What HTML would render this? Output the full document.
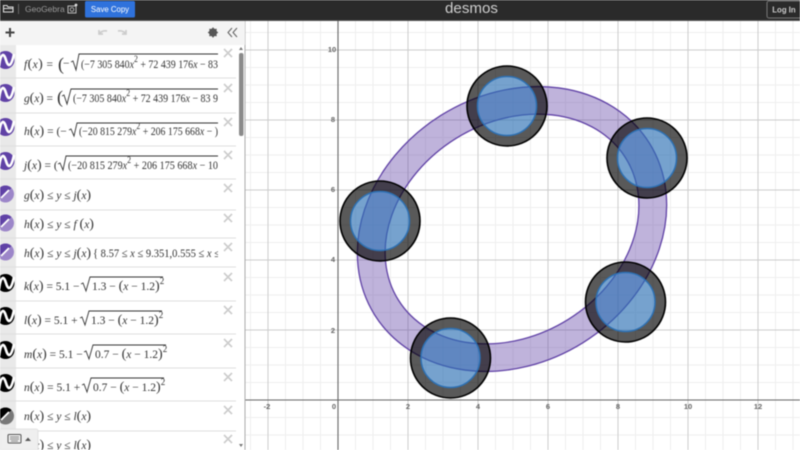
<!DOCTYPE html>
<html><head><meta charset="utf-8"><style>
html,body{margin:0;padding:0;background:#fff;width:800px;height:450px;overflow:hidden}
svg{display:block;filter:blur(.5px)}
text{font-family:"Liberation Sans",sans-serif}
.m text,text.m{font-family:"Liberation Serif",serif;font-size:11.5px;fill:#333}
.i{font-style:italic}
.t{font-size:7.5px;fill:#666;font-weight:bold}
.x{stroke:#ccc;stroke-width:1.6;fill:none}
.s{stroke:#ddd;stroke-width:1}
.r{fill:none;stroke:#333;stroke-width:.9}
</style></head><body>
<svg width="800" height="450" viewBox="0 0 800 450" xmlns="http://www.w3.org/2000/svg">
<defs>
<clipPath id="c"><rect x="17" y="45" width="201" height="405"/></clipPath>
<clipPath id="ic"><rect x="0" y="45" width="16" height="405"/></clipPath>
</defs>
<rect width="800" height="450" fill="#fff"/>
<!-- grid -->
<path fill="none" stroke="#eee" stroke-width="1" d="M250.5 21V450M285.5 21V450M303 21V450M320.5 21V450M355.5 21V450M373 21V450M390.5 21V450M425.5 21V450M443 21V450M460.5 21V450M495.5 21V450M513 21V450M530.5 21V450M565.5 21V450M583 21V450M600.5 21V450M635.5 21V450M653 21V450M670.5 21V450M705.5 21V450M723 21V450M740.5 21V450M775.5 21V450M793 21V450M245 435H800M245 417.5H800M245 382.5H800M245 365H800M245 347.5H800M245 312.5H800M245 295H800M245 277.5H800M245 242.5H800M245 225H800M245 207.5H800M245 172.5H800M245 155H800M245 137.5H800M245 102.5H800M245 85H800M245 67.5H800M245 32.5H800"/>
<path fill="none" stroke="#ccc" stroke-width="1" d="M268 21V450M408 21V450M478 21V450M548 21V450M618 21V450M688 21V450M758 21V450M245 330H800M245 260H800M245 190H800M245 120H800M245 50H800"/>
<path fill="none" stroke="#666" stroke-width="1.1" d="M338 21V450M245 400H800"/>
<!-- tick labels -->
<g class="t" text-anchor="middle">
<text class="t" x="267" y="409">-2</text><text class="t" x="334" y="409">0</text><text class="t" x="408" y="409">2</text><text class="t" x="478" y="409">4</text><text class="t" x="548" y="409">6</text><text class="t" x="618" y="409">8</text><text class="t" x="688" y="409">10</text><text class="t" x="758" y="409">12</text>
<text class="t" x="333" y="333">2</text><text class="t" x="333" y="262">4</text><text class="t" x="333" y="192">6</text><text class="t" x="333" y="122">8</text><text class="t" x="332" y="52">10</text>
</g>
<!-- purple ring -->
<g transform="translate(512 229) rotate(-32)">
<path fill="#6042a6" fill-opacity=".4" fill-rule="evenodd" d="M-162 0A162 134 0 1 0 162 0A162 134 0 1 0 -162 0ZM-134 0A134 106.500 0 1 0 134 0A134 106.500 0 1 0 -134 0Z"/>
<ellipse rx="162" ry="134" fill="none" stroke="#6042a6" stroke-width="1.3"/>
<ellipse rx="134" ry="106.500" fill="none" stroke="#6042a6" stroke-width="1.3"/>
</g>
<!-- circles -->
<g id="circles">
<path fill="#000" fill-opacity=".65" fill-rule="evenodd" d="M340 221a40 40 0 1 0 80 0a40 40 0 1 0 -80 0ZM350.500 221a29.500 29.500 0 1 0 59 0a29.500 29.500 0 1 0 -59 0Z"/>
<path fill="#000" fill-opacity=".65" fill-rule="evenodd" d="M467 106a40 40 0 1 0 80 0a40 40 0 1 0 -80 0ZM477.500 106a29.500 29.500 0 1 0 59 0a29.500 29.500 0 1 0 -59 0Z"/>
<path fill="#000" fill-opacity=".65" fill-rule="evenodd" d="M607 158a40 40 0 1 0 80 0a40 40 0 1 0 -80 0ZM617.500 158a29.500 29.500 0 1 0 59 0a29.500 29.500 0 1 0 -59 0Z"/>
<path fill="#000" fill-opacity=".65" fill-rule="evenodd" d="M585.500 302a40 40 0 1 0 80 0a40 40 0 1 0 -80 0ZM596 302a29.500 29.500 0 1 0 59 0a29.500 29.500 0 1 0 -59 0Z"/>
<path fill="#000" fill-opacity=".65" fill-rule="evenodd" d="M410.500 358a40 40 0 1 0 80 0a40 40 0 1 0 -80 0ZM421 358a29.500 29.500 0 1 0 59 0a29.500 29.500 0 1 0 -59 0Z"/>
<g fill="#2d70b3" fill-opacity=".65" stroke="#2d70b3" stroke-width="1.5">
<circle cx="380" cy="221" r="29.500"/><circle cx="507" cy="106" r="29.500"/><circle cx="647" cy="158" r="29.500"/><circle cx="625.500" cy="302" r="29.500"/><circle cx="450.500" cy="358" r="29.500"/>
</g>
<g fill="none" stroke="#000" stroke-width="1.600">
<circle cx="380" cy="221" r="40"/><circle cx="507" cy="106" r="40"/><circle cx="647" cy="158" r="40"/><circle cx="625.500" cy="302" r="40"/><circle cx="450.500" cy="358" r="40"/>
</g>
</g>
<!-- left panel -->
<rect x="0" y="21" width="245" height="429" fill="#fff"/>
<rect x="244.500" y="21" width="1" height="429" fill="#aaa"/>
<rect x="0" y="21" width="245" height="24" fill="#f4f4f4"/>
<rect x="0" y="45" width="16" height="405" fill="#e9e9e9"/>
<path class="s" d="M0 78H236M0 113H236M0 146H236M0 179H236M0 210H236M0 238H236M0 267H236M0 301H236M0 334H236M0 368H236M0 401H236M0 431H236"/>
<!-- toolbar -->
<path d="M10 28V37M5.500 32.500H14.500" stroke="#444" stroke-width="2" fill="none"/>
<path d="M99 34q3-4 8-3M99 30v4h4" fill="none" stroke="#ccc" stroke-width="1.700"/>
<path d="M126 34q-3-4-8-3M126 30v4h-4" fill="none" stroke="#ccc" stroke-width="1.700"/>
<circle cx="213" cy="32.500" r="3" fill="none" stroke="#555" stroke-width="2.200"/>
<path d="M213 27.500v10M208 32.500h10M209.500 29l7 7M216.500 29l-7 7" stroke="#555" stroke-width="1.300"/>
<path d="M232 28l-4 4.500l4 4.500M237 28l-4 4.500l4 4.500" fill="none" stroke="#666" stroke-width="1.100"/>
<!-- scrollbar -->
<rect x="239" y="53" width="4.500" height="83" rx="2" fill="#8a8a8a"/>
<path d="M241 47l-2 3h4zM241 447l-2-3h4z" fill="#777"/>
<!-- icons -->
<g clip-path="url(#ic)">
<g fill="#6042a6"><circle cx="5.500" cy="60" r="9"/><circle cx="5.500" cy="93" r="9"/><circle cx="5.500" cy="127" r="9"/><circle cx="5.500" cy="161" r="9"/></g>
<g fill="none" stroke="#fff" stroke-width="2.600"><path d="M-1 66C1 52 4 53 6 60S11 68 14 54"/><path d="M-1 99C1 85 4 86 6 93S11 101 14 87"/><path d="M-1 133C1 119 4 120 6 127S11 135 14 121"/><path d="M-1 167C1 153 4 154 6 161S11 169 14 155"/></g>
<g fill="#000"><circle cx="5.500" cy="283" r="9"/><circle cx="5.500" cy="316" r="9"/><circle cx="5.500" cy="350" r="9"/><circle cx="5.500" cy="383" r="9"/></g>
<g fill="none" stroke="#fff" stroke-width="2.600"><path d="M-1 289C1 275 4 276 6 283S11 291 14 277"/><path d="M-1 322C1 308 4 309 6 316S11 324 14 310"/><path d="M-1 356C1 342 4 343 6 350S11 358 14 344"/><path d="M-1 389C1 375 4 376 6 383S11 391 14 377"/></g>
<g fill="#9c86c9"><circle cx="5.500" cy="194" r="8.500"/><circle cx="5.500" cy="223" r="8.500"/><circle cx="5.500" cy="252" r="8.500"/></g>
<path fill="#6042a6" d="M-3 194A8.500 8.500 0 0 1 11.500 188L-1 200ZM-3 223A8.500 8.500 0 0 1 11.500 217L-1 229ZM-3 252A8.500 8.500 0 0 1 11.500 246L-1 258Z"/>
<path stroke="#fff" stroke-width="1.800" d="M1 198L9 190M1 227L9 219M1 256L9 248"/>
<circle cx="5.500" cy="416" r="8.500" fill="#777"/><path fill="#000" d="M-3 416A8.500 8.500 0 0 1 11.500 410L-1 422Z"/>
<path stroke="#fff" stroke-width="1.800" d="M1 420L9 412"/>
</g>
<!-- X marks -->
<path class="x" d="M224 49l8 8M232 49l-8 8M224 84l8 8M232 84l-8 8M224 118l8 8M232 118l-8 8M224 151l8 8M232 151l-8 8M224 184l8 8M232 184l-8 8M224 214l8 8M232 214l-8 8M224 243l8 8M232 243l-8 8M224 273l8 8M232 273l-8 8M224 306l8 8M232 306l-8 8M224 339l8 8M232 339l-8 8M224 373l8 8M232 373l-8 8M224 406l8 8M232 406l-8 8M224 435l8 8M232 435l-8 8"/>
<!-- math -->
<g class="m" clip-path="url(#c)">
<text x="24" y="68" textLength="29"><tspan class="i">f</tspan><tspan font-size="14">(</tspan><tspan class="i">x</tspan><tspan font-size="14">)</tspan> =</text>
<text x="58" y="70" style="font-size:18px">(</text>
<text x="63" y="67">−</text>
<path class="r" d="M71 62l2-1l3 9l3-16H218"/>
<text x="81" y="68" textLength="137" lengthAdjust="spacingAndGlyphs">(−7 305 840<tspan class="i">x</tspan><tspan font-size="9" dy="-6">2</tspan><tspan dy="6"> + 72 439 176</tspan><tspan class="i">x</tspan> − 83</text>

<text x="24" y="102" textLength="29"><tspan class="i">g</tspan><tspan font-size="14">(</tspan><tspan class="i">x</tspan><tspan font-size="14">)</tspan> =</text>
<text x="57" y="103" style="font-size:18px">(</text>
<path class="r" d="M62 96l2-1l3 9l4-15H218"/>
<text x="73" y="102" textLength="145" lengthAdjust="spacingAndGlyphs">(−7 305 840<tspan class="i">x</tspan><tspan font-size="9" dy="-6">2</tspan><tspan dy="6"> + 72 439 176</tspan><tspan class="i">x</tspan> − 83 9</text>

<text x="24" y="135"><tspan class="i">h</tspan><tspan font-size="14">(</tspan><tspan class="i">x</tspan><tspan font-size="14">)</tspan> = (−</text>
<path class="r" d="M69 130l2-1l3 7l3-13H218"/>
<text x="79" y="135" textLength="139" lengthAdjust="spacingAndGlyphs">(−20 815 279<tspan class="i">x</tspan><tspan font-size="9" dy="-6">2</tspan><tspan dy="6"> + 206 175 668</tspan><tspan class="i">x</tspan> − )</text>

<text x="24" y="169"><tspan class="i">j</tspan><tspan font-size="14">(</tspan><tspan class="i">x</tspan><tspan font-size="14">)</tspan> = (</text>
<path class="r" d="M58 164l2-1l3 7l3-14H218"/>
<text x="68" y="169" textLength="150" lengthAdjust="spacingAndGlyphs">(−20 815 279<tspan class="i">x</tspan><tspan font-size="9" dy="-6">2</tspan><tspan dy="6"> + 206 175 668</tspan><tspan class="i">x</tspan> − 10</text>

<text x="24" y="199"><tspan class="i">g</tspan><tspan font-size="14">(</tspan><tspan class="i">x</tspan><tspan font-size="14">)</tspan> ≤ <tspan class="i">y</tspan> ≤ <tspan class="i">j</tspan><tspan font-size="14">(</tspan><tspan class="i">x</tspan><tspan font-size="14">)</tspan></text>
<text x="24" y="228"><tspan class="i">h</tspan><tspan font-size="14">(</tspan><tspan class="i">x</tspan><tspan font-size="14">)</tspan> ≤ <tspan class="i">y</tspan> ≤ <tspan class="i">f</tspan> <tspan font-size="14">(</tspan><tspan class="i">x</tspan><tspan font-size="14">)</tspan></text>
<text x="24" y="257"><tspan class="i">h</tspan><tspan font-size="14">(</tspan><tspan class="i">x</tspan><tspan font-size="14">)</tspan> ≤ <tspan class="i">y</tspan> ≤ <tspan class="i">j</tspan><tspan font-size="14">(</tspan><tspan class="i">x</tspan><tspan font-size="14">)</tspan></text>
<text x="93" y="257" textLength="127" lengthAdjust="spacingAndGlyphs">{ 8.57 ≤ <tspan class="i">x</tspan> ≤ 9.351,0.555 ≤ <tspan class="i">x</tspan> ≤</text>

<text x="24" y="290"><tspan class="i">k</tspan><tspan font-size="14">(</tspan><tspan class="i">x</tspan><tspan font-size="14">)</tspan> = 5.1 −</text>
<path class="r" d="M81 284l2-1l3 8l4-14H163"/>
<text x="92" y="290">1.3 − <tspan font-size="14">(</tspan><tspan class="i">x</tspan> − 1.2<tspan font-size="14">)</tspan><tspan font-size="9" dy="-6">2</tspan></text>

<text x="24" y="324"><tspan class="i">l</tspan><tspan font-size="14">(</tspan><tspan class="i">x</tspan><tspan font-size="14">)</tspan> = 5.1 +</text>
<path class="r" d="M80 318l2-1l3 8l4-14H162"/>
<text x="91" y="324">1.3 − <tspan font-size="14">(</tspan><tspan class="i">x</tspan> − 1.2<tspan font-size="14">)</tspan><tspan font-size="9" dy="-6">2</tspan></text>

<text x="24" y="358"><tspan class="i">m</tspan><tspan font-size="14">(</tspan><tspan class="i">x</tspan><tspan font-size="14">)</tspan> = 5.1 −</text>
<path class="r" d="M84 352l2-1l3 8l4-14H166"/>
<text x="95" y="358">0.7 − <tspan font-size="14">(</tspan><tspan class="i">x</tspan> − 1.2<tspan font-size="14">)</tspan><tspan font-size="9" dy="-6">2</tspan></text>

<text x="24" y="391"><tspan class="i">n</tspan><tspan font-size="14">(</tspan><tspan class="i">x</tspan><tspan font-size="14">)</tspan> = 5.1 +</text>
<path class="r" d="M82 385l2-1l3 8l4-14H164"/>
<text x="93" y="391">0.7 − <tspan font-size="14">(</tspan><tspan class="i">x</tspan> − 1.2<tspan font-size="14">)</tspan><tspan font-size="9" dy="-6">2</tspan></text>

<text x="24" y="420"><tspan class="i">n</tspan><tspan font-size="14">(</tspan><tspan class="i">x</tspan><tspan font-size="14">)</tspan> ≤ <tspan class="i">y</tspan> ≤ <tspan class="i">l</tspan><tspan font-size="14">(</tspan><tspan class="i">x</tspan><tspan font-size="14">)</tspan></text>
<text x="24" y="449"><tspan class="i">n</tspan><tspan font-size="14">(</tspan><tspan class="i">x</tspan><tspan font-size="14">)</tspan> ≤ <tspan class="i">y</tspan> ≤ <tspan class="i">l</tspan><tspan font-size="14">(</tspan><tspan class="i">x</tspan><tspan font-size="14">)</tspan></text>
</g>
<!-- keyboard button -->
<path d="M0 429H36a2 2 0 0 1 2 2V450H0Z" fill="#efefef" stroke="#ddd" stroke-width=".8"/>
<rect x="8" y="434.500" width="13" height="8.500" rx="1" fill="none" stroke="#555" stroke-width="1"/>
<path d="M10 437h9M10 439h9M11 441h7" stroke="#666" stroke-width=".8"/>
<path d="M25 441l3-3.500l3 3.500z" fill="#555"/>
<!-- header -->
<rect width="800" height="20.500" fill="#2a2a2a"/>
<rect y="20" width="800" height="1" fill="#555"/>
<path d="M3.500 5.500h3.500l1 1.500h5v5h-9.500zM3.500 8.500h9.500" fill="none" stroke="#ddd" stroke-width="1.100"/>
<rect x="18" y="4" width="1" height="10" fill="#666"/>
<text x="25" y="12" font-size="8.500" fill="#9a9a9a">GeoGebra</text>
<rect x="68" y="6" width="8" height="7" fill="none" stroke="#bbb" stroke-width="1"/>
<circle cx="72" cy="9.500" r="1.800" fill="none" stroke="#bbb" stroke-width=".9"/>
<circle cx="76" cy="5" r="1.400" fill="#ddd"/>
<rect x="85" y="1" width="50" height="16.500" rx="1.500" fill="#2f72dc"/>
<text x="110" y="12" font-size="7.800" fill="#fff" text-anchor="middle">Save Copy</text>
<text x="445" y="13" font-size="15" fill="#cfcfcf" textLength="53" lengthAdjust="spacingAndGlyphs">desmos</text>
<rect x="767" y="1" width="35" height="17" rx="2" fill="none" stroke="#777" stroke-width="1"/>
<text x="784" y="12.500" font-size="7.800" font-weight="bold" fill="#ccc" text-anchor="middle">Log In</text>
</svg>
</body></html>
